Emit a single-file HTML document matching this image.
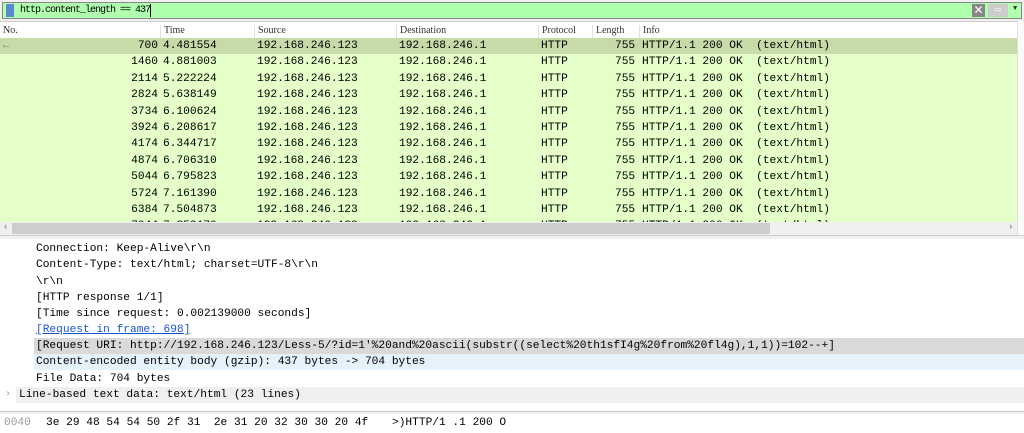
<!DOCTYPE html>
<html><head><meta charset="utf-8"><style>
*{margin:0;padding:0;box-sizing:border-box}
body{width:1024px;height:433px;overflow:hidden;background:#fff;font-family:"Liberation Mono",monospace;font-size:11.2px;color:#000;position:relative}
.abs{position:absolute}
#filter{left:0;top:0;width:1024px;height:21px;background:#f0f0f0}
#fbox{left:2px;top:2px;width:1020px;height:17px;background:#afffaf;border:1px solid #888}
#hdr{left:0;top:21px;width:1017px;height:17px;background:#fff;border-top:1px solid #ccc;font-family:"Liberation Serif",serif;font-size:10px;color:#333}
.hc{position:absolute;top:3px;border-left:1px solid #e0e0e0;padding-left:3px;height:14px}
.row{position:absolute;left:0;width:1017px;height:16.4px;background:#e4ffc7;line-height:16.4px;white-space:pre}
.row span{position:absolute}
.det{position:absolute;left:36px;white-space:pre;line-height:16.4px}
</style></head><body>
<div id="filter" class="abs"></div>
<div id="fbox" class="abs"><div class="abs" style="left:3px;top:1px;width:8px;height:13px;background:#5b8ad0"></div><div class="abs" style="left:17px;top:1px;font-size:10px;letter-spacing:-1px;line-height:14px">http.content_length == 437</div>
<div class="abs" style="left:147px;top:1px;width:1px;height:13px;background:#000"></div>
<div class="abs" style="left:969px;top:1px;width:13px;height:13px;background:#888;color:#fff;font-size:12px;line-height:13px;text-align:center;font-family:'Liberation Sans'">✕</div>
<div class="abs" style="left:985px;top:1px;width:20px;height:13px;background:#ccc;color:#fff;font-size:12px;line-height:13px;text-align:center">⇨</div>
<div class="abs" style="left:1010px;top:2px;font-size:7px;color:#333">▼</div></div>
<div id="hdr" class="abs">
<div class="hc" style="left:0;border:0">No.</div><div class="hc" style="left:160px">Time</div><div class="hc" style="left:254px">Source</div><div class="hc" style="left:396px">Destination</div><div class="hc" style="left:538px">Protocol</div><div class="hc" style="left:592px">Length</div><div class="hc" style="left:639px">Info</div>
</div>
<div class="abs" style="left:1017px;top:21px;width:7px;height:215px;background:#fafafa;border-left:1px solid #ddd"></div>
<div id="rows"></div>
<div class="abs" style="left:0;top:222px;width:1017px;height:13px;background:#f0f0f0"><div class="abs" style="left:12px;top:1px;width:758px;height:11px;background:#cdcdcd"></div><div class="abs" style="left:3px;top:0;font-size:9px;color:#666">‹</div><div class="abs" style="left:1008px;top:0;font-size:9px;color:#666">›</div></div>
<div class="abs" style="left:0;top:235px;width:1024px;height:4px;background:#f0f0f0;border-top:1px solid #ccc"></div>
<div class="abs" style="left:34px;top:338px;width:990px;height:16px;background:#d9d9d9"></div>
<div class="abs" style="left:34px;top:354px;width:990px;height:16px;background:#e5f1fb"></div>
<div class="abs" style="left:16px;top:387px;width:1008px;height:16px;background:#efefef"></div>
<div class="det" style="top:240.5px">Connection: Keep-Alive\r\n</div>
<div class="det" style="top:257px">Content-Type: text/html; charset=UTF-8\r\n</div>
<div class="det" style="top:273.5px">\r\n</div>
<div class="det" style="top:290px">[HTTP response 1/1]</div>
<div class="det" style="top:306px">[Time since request: 0.002139000 seconds]</div>
<div class="det" style="top:322px;color:#1a55d0;text-decoration:underline">[Request in frame: 698]</div>
<div class="det" style="top:338px">[Request URI: http://192.168.246.123/Less-5/?id=1'%20and%20ascii(substr((select%20th1sfI4g%20from%20fl4g),1,1))=102--+]</div>
<div class="det" style="top:354px">Content-encoded entity body (gzip): 437 bytes -&gt; 704 bytes</div>
<div class="det" style="top:371px">File Data: 704 bytes</div>
<div class="det" style="top:387px;left:5px;color:#999;font-size:10px">›</div>
<div class="det" style="top:387px;left:19px">Line-based text data: text/html (23 lines)</div>
<div class="abs" style="left:0;top:411px;width:1024px;height:3px;background:#f0f0f0;border-top:1px solid #ccc"></div>
<div class="abs" style="left:0;top:414px;width:1024px;height:19px;background:#fff;white-space:pre;line-height:19px"><span style="position:absolute;left:4px;color:#999">0040</span><span style="position:absolute;left:46px;background:#fff">3e 29 48 54 54 50 2f 31  2e 31 20 32 30 30 20 4f</span><span style="position:absolute;left:392px">&gt;)HTTP/1 .1 200 O</span></div>
<script>
var d=[[700,"4.481554"],[1460,"4.881003"],[2114,"5.222224"],[2824,"5.638149"],[3734,"6.100624"],[3924,"6.208617"],[4174,"6.344717"],[4874,"6.706310"],[5044,"6.795823"],[5724,"7.161390"],[6384,"7.504873"],[7044,"7.852170"]];
var h="";d.forEach(function(r,i){var t=38+i*16.4;var h2=i==11?(222-t):16.4;
h+='<div class="row" style="top:'+t+'px;height:'+h2+'px;overflow:hidden;'+(i==0?'background:#c6dba8':'')+'">'+(i==0?'<span style="left:3px;color:#888">←</span>':'')+'<span style="right:859px">'+r[0]+'</span><span style="left:163px">'+r[1]+'</span><span style="left:257px">192.168.246.123</span><span style="left:399px">192.168.246.1</span><span style="left:541px">HTTP</span><span style="left:615px">755</span><span style="left:642px">HTTP/1.1 200 OK  (text/html)</span></div>';});
document.getElementById("rows").innerHTML=h;
</script>
</body></html>
